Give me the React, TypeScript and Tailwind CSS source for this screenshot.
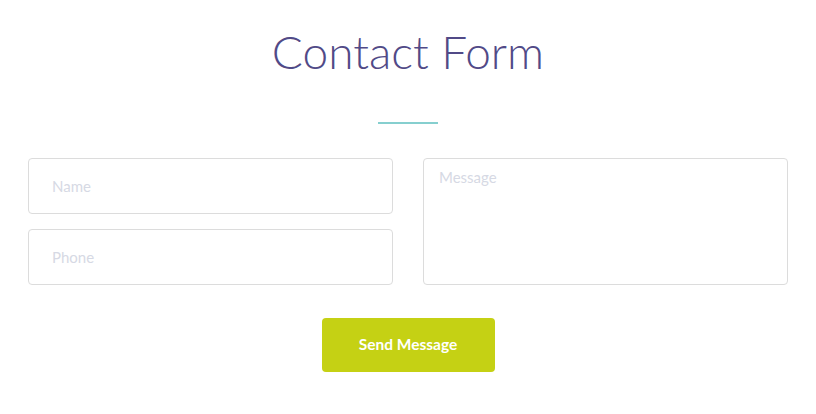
export default function App() {
  return (
    <div className="min-h-screen bg-white font-['Lato',sans-serif]">
      <div className="flex flex-col items-center pt-[23px]">
        <h1 className="text-[46px] font-light leading-[58px] text-[#514a87]">Contact Form</h1>
        <div className="mt-[41px] h-[2px] w-[60px] bg-[#86cfcf]" />
      </div>

      <form className="pl-[28px] pr-[28px] pt-[34px]">
        <div className="grid grid-cols-[365px_365px] justify-between">
          <div className="flex flex-col gap-[15px]">
            <input
              type="text"
              placeholder="Name"
              className="h-[56px] w-full rounded-[4px] border border-[#dcdcdc] px-[23px] text-[15px] outline-none placeholder:text-[#d6d9e4]"
            />
            <input
              type="text"
              placeholder="Phone"
              className="h-[56px] w-full rounded-[4px] border border-[#dcdcdc] px-[23px] text-[15px] outline-none placeholder:text-[#d6d9e4]"
            />
          </div>
          <textarea
            placeholder="Message"
            className="h-[127px] w-full resize-none rounded-[4px] border border-[#dcdcdc] px-[15px] py-[7px] text-[15px] outline-none placeholder:text-[#d6d9e4]"
          />
        </div>

        <div className="flex justify-center pt-[33px]">
          <button
            type="button"
            className="h-[54px] w-[173px] rounded-[4px] bg-[#c5d114] text-[15.5px] font-bold text-white"
          >
            Send Message
          </button>
        </div>
      </form>
    </div>
  );
}
